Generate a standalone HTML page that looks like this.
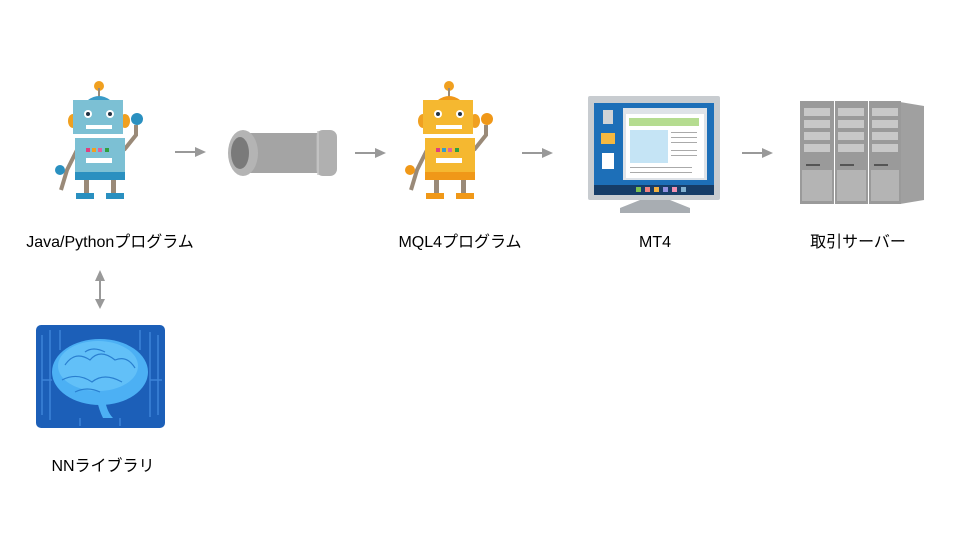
<!DOCTYPE html>
<html><head><meta charset="utf-8"><style>
body{margin:0;width:960px;height:540px;background:#fff;position:relative;overflow:hidden;font-family:"Liberation Sans","Noto Sans CJK JP",sans-serif}
.l{position:absolute;font-size:16px;line-height:18px;height:18px;color:#000;transform:translateX(-50%);white-space:nowrap}
svg{position:absolute;left:0;top:0}
</style></head><body>
<svg width="960" height="540" viewBox="0 0 960 540">
<defs>
<g id="arrow"><line x1="0" y1="0" x2="22" y2="0" stroke="#999" stroke-width="2"/><polygon points="20,-5 31,0 20,5" fill="#999"/></g>
</defs>
<g>
 <circle cx="99" cy="86" r="5" fill="#f0a020"/>
 <line x1="99" y1="88" x2="99" y2="100" stroke="#9a8a78" stroke-width="2"/>
 <ellipse cx="73" cy="121" rx="5" ry="7" fill="#f0a020"/><ellipse cx="125" cy="121" rx="5" ry="7" fill="#f0a020"/>
 <path d="M88,100 q11,-8 22,0z" fill="#3a9cc8"/>
 <rect x="73" y="100" width="50" height="34" fill="#7cc0d4"/>
 <circle cx="88" cy="114" r="4" fill="#fff"/><circle cx="88" cy="114" r="2" fill="#234"/>
 <circle cx="110" cy="114" r="4" fill="#fff"/><circle cx="110" cy="114" r="2" fill="#234"/>
 <rect x="86" y="125" width="26" height="4" fill="#fff"/>
 <path d="M77,150 l-10,20 l-6,20" stroke="#9a8a78" stroke-width="4" fill="none"/><circle cx="60" cy="170" r="5" fill="#2a90c0"/>
 <path d="M124,150 l12,-15 l0,-10" stroke="#9a8a78" stroke-width="4" fill="none"/><circle cx="137" cy="119" r="6" fill="#2a90c0"/>
 <rect x="75" y="138" width="50" height="42" fill="#7cc0d4"/><rect x="75" y="172" width="50" height="8" fill="#2a90c0"/>
 <rect x="86" y="148" width="4" height="4" fill="#e04080"/><rect x="92" y="148" width="4" height="4" fill="#f0a020"/><rect x="98" y="148" width="4" height="4" fill="#e060a0"/><rect x="105" y="148" width="4" height="4" fill="#30a040"/>
 <rect x="86" y="158" width="26" height="5" fill="#fff"/>
 <rect x="84" y="180" width="5" height="13" fill="#9a8a78"/><rect x="111" y="180" width="5" height="13" fill="#9a8a78"/>
 <rect x="76" y="193" width="18" height="6" fill="#2a90c0"/><rect x="106" y="193" width="18" height="6" fill="#2a90c0"/>
</g>
<g transform="translate(350,0)">
 <circle cx="99" cy="86" r="5" fill="#f0a020"/><line x1="99" y1="88" x2="99" y2="100" stroke="#9a8a78" stroke-width="2"/>
 <ellipse cx="73" cy="121" rx="5" ry="7" fill="#f0a020"/><ellipse cx="125" cy="121" rx="5" ry="7" fill="#f0a020"/>
 <path d="M88,100 q11,-8 22,0z" fill="#f09818"/>
 <rect x="73" y="100" width="50" height="34" fill="#f5b830"/>
 <circle cx="88" cy="114" r="4" fill="#fff"/><circle cx="88" cy="114" r="2" fill="#234"/>
 <circle cx="110" cy="114" r="4" fill="#fff"/><circle cx="110" cy="114" r="2" fill="#234"/>
 <rect x="86" y="125" width="26" height="4" fill="#fff"/>
 <path d="M77,150 l-10,20 l-6,20" stroke="#9a8a78" stroke-width="4" fill="none"/><circle cx="60" cy="170" r="5" fill="#f09818"/>
 <path d="M124,150 l12,-15 l0,-10" stroke="#9a8a78" stroke-width="4" fill="none"/><circle cx="137" cy="119" r="6" fill="#f09818"/>
 <rect x="75" y="138" width="50" height="42" fill="#f5b830"/><rect x="75" y="172" width="50" height="8" fill="#f09818"/>
 <rect x="86" y="148" width="4" height="4" fill="#e04080"/><rect x="92" y="148" width="4" height="4" fill="#3a9cc8"/><rect x="98" y="148" width="4" height="4" fill="#e060a0"/><rect x="105" y="148" width="4" height="4" fill="#30a040"/>
 <rect x="86" y="158" width="26" height="5" fill="#fff"/>
 <rect x="84" y="180" width="5" height="13" fill="#9a8a78"/><rect x="111" y="180" width="5" height="13" fill="#9a8a78"/>
 <rect x="76" y="193" width="18" height="6" fill="#f09818"/><rect x="106" y="193" width="18" height="6" fill="#f09818"/>
</g>
<rect x="238" y="133" width="90" height="40" fill="#a4a4a4"/>
<rect x="316" y="130" width="21" height="46" rx="7" fill="#b0b0b0"/>
<line x1="318" y1="131" x2="318" y2="175" stroke="#c8c8c8" stroke-width="1.5"/>
<ellipse cx="243" cy="153" rx="15" ry="23" fill="#b4b4b4"/>
<ellipse cx="240" cy="153" rx="9" ry="16" fill="#7a7a7a"/>
<use href="#arrow" x="175" y="152"/><use href="#arrow" x="355" y="153"/><use href="#arrow" x="522" y="153"/><use href="#arrow" x="742" y="153"/>
<path d="M640,200 h30 l20,8 v5 h-70 v-5z" fill="#a8adb2"/>
<rect x="588" y="96" width="132" height="104" rx="2" fill="#c8ccd0"/>
<rect x="594" y="103" width="120" height="92" fill="#1d6fb8"/>
<rect x="594" y="185" width="120" height="10" fill="#163d68"/>
<rect x="623" y="108" width="84" height="72" fill="#dfe3e8"/>
<rect x="626" y="114" width="78" height="64" fill="#fff"/>
<rect x="629" y="118" width="70" height="8" fill="#b5dc90"/>
<rect x="630" y="130" width="38" height="33" fill="#c5e4f5"/>
<rect x="603" y="110" width="10" height="14" fill="#cfd3d6"/>
<rect x="601" y="133" width="14" height="11" fill="#f6b940"/>
<rect x="602" y="153" width="12" height="16" fill="#fff"/>
<g fill="#aaa"><rect x="671" y="132" width="26" height="1"/><rect x="671" y="137" width="26" height="1"/><rect x="671" y="142" width="26" height="1"/><rect x="671" y="150" width="26" height="1"/><rect x="671" y="155" width="26" height="1"/><rect x="630" y="167" width="62" height="1"/><rect x="630" y="172" width="62" height="1"/></g>
<rect x="636" y="187" width="5" height="5" fill="#7cc050"/><rect x="645" y="187" width="5" height="5" fill="#f08080"/><rect x="654" y="187" width="5" height="5" fill="#f0b040"/><rect x="663" y="187" width="5" height="5" fill="#9090e0"/><rect x="672" y="187" width="5" height="5" fill="#f090b0"/><rect x="681" y="187" width="5" height="5" fill="#80b0d0"/>
<path d="M900,102 l24,4 v94 l-24,4z" fill="#a0a0a0"/>
<g fill="#9a9a9a"><rect x="800" y="101" width="34" height="103"/><rect x="835" y="101" width="33" height="103"/><rect x="869" y="101" width="32" height="103"/></g>
<g fill="#c8c8c8"><rect x="804" y="108" width="26" height="8"/><rect x="804" y="120" width="26" height="8"/><rect x="804" y="132" width="26" height="8"/><rect x="804" y="144" width="26" height="8"/><rect x="838" y="108" width="26" height="8"/><rect x="838" y="120" width="26" height="8"/><rect x="838" y="132" width="26" height="8"/><rect x="838" y="144" width="26" height="8"/><rect x="872" y="108" width="26" height="8"/><rect x="872" y="120" width="26" height="8"/><rect x="872" y="132" width="26" height="8"/><rect x="872" y="144" width="26" height="8"/></g>
<g fill="#555"><rect x="806" y="164" width="14" height="2"/><rect x="840" y="164" width="14" height="2"/><rect x="874" y="164" width="14" height="2"/></g>
<g fill="#b4b4b4"><rect x="802" y="170" width="30" height="31"/><rect x="837" y="170" width="29" height="31"/><rect x="871" y="170" width="28" height="31"/></g>
<line x1="100" y1="278" x2="100" y2="302" stroke="#999" stroke-width="2"/>
<polygon points="95,281 100,270 105,281" fill="#999"/><polygon points="95,299 100,309 105,299" fill="#999"/>
<rect x="36" y="325" width="129" height="103" rx="5" fill="#1c5fb8"/>
<g stroke="#3c84d8" stroke-width="1.5" fill="none"><path d="M42,335 v80 M50,330 v90 M150,332 v85 M158,335 v80 M60,330 v20 M140,330 v20 M80,418 v8 M120,418 v8 M42,380 h10 M150,380 h12"/></g>
<ellipse cx="100" cy="372" rx="48" ry="33" fill="#4cb0f4"/>
<ellipse cx="98" cy="366" rx="40" ry="25" fill="#62c0f8"/>
<path d="M105,400 q2,12 8,18 h-10 q-4,-8 -6,-18z" fill="#4cb0f4"/>
<g stroke="#2a7fd0" stroke-width="1.2" fill="none"><path d="M65,365 q10,-15 25,-5 q10,-12 25,0 q12,-5 20,8"/><path d="M62,380 q15,-8 30,2 q12,-10 30,0"/><path d="M75,392 q12,-6 25,0"/><path d="M85,352 q8,-6 20,0"/></g>
</svg>
<div class="l" style="left:110px;top:234px">Java/Pythonプログラム</div>
<div class="l" style="left:460px;top:234px">MQL4プログラム</div>
<div class="l" style="left:655px;top:234px">MT4</div>
<div class="l" style="left:858px;top:234px">取引サーバー</div>
<div class="l" style="left:103px;top:458px">NNライブラリ</div>
</body></html>
